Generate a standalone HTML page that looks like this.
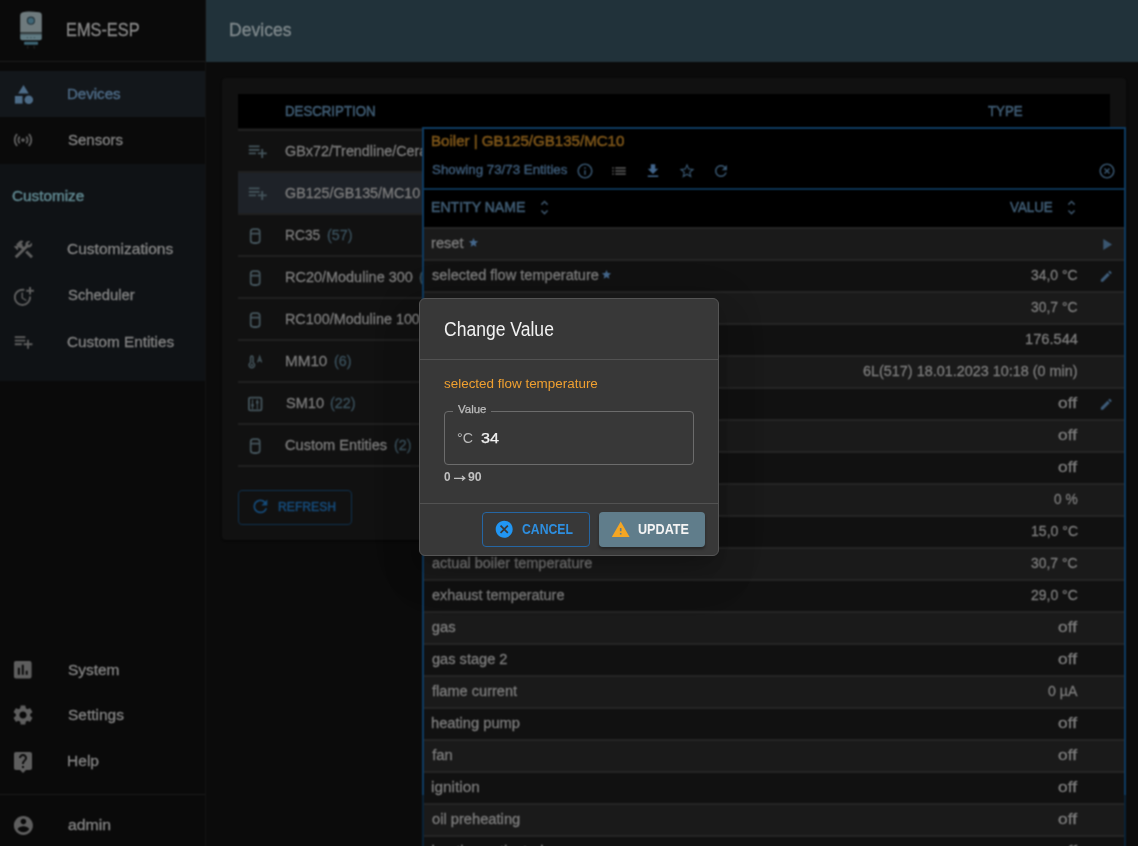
<!DOCTYPE html>
<html><head><meta charset="utf-8"><title>EMS-ESP Devices</title>
<style>html,body{margin:0;padding:0;}body{width:1138px;height:846px;overflow:hidden;position:relative;background:#0b0b0b;font-family:"Liberation Sans",sans-serif;}svg{display:block}#w{position:absolute;left:-20px;top:-20px;width:1178px;height:886px;overflow:hidden;background:#0b0b0b;filter:url(#bf);}#c{position:absolute;left:20px;top:20px;width:1138px;height:846px;}</style></head><body><svg width="0" height="0" style="position:absolute"><filter id="bf" x="0" y="0" width="100%" height="100%" color-interpolation-filters="sRGB"><feConvolveMatrix order="3" kernelMatrix="1 2 1 2 4 2 1 2 1" divisor="16" edgeMode="duplicate"/></filter></svg><div id="w"><div id="c">
<div style="position:absolute;left:-20px;top:-20px;width:225px;height:886px;background:#0a0a0a;"></div>
<div style="position:absolute;left:-20px;top:61px;width:225px;height:1px;background:#1c1c1c;"></div>
<div style="position:absolute;left:-20px;top:71px;width:225px;height:46px;background:#13171b;"></div>
<div style="position:absolute;left:-20px;top:164px;width:225px;height:217px;background:#0f1215;"></div>
<div style="position:absolute;left:-20px;top:794px;width:225px;height:1px;background:#1a1a1a;"></div>
<div style="position:absolute;left:205px;top:-20px;width:1px;height:886px;background:#131313;"></div>
<svg style="position:absolute;left:14px;top:6px" width="36" height="46" viewBox="0 0 36 46">
<path d="M6.2 9.2Q6.2 6.6 8.8 6.2L11.5 5.7Q16.9 5.4 25.3 6.2Q27.8 6.5 27.8 9V26.3H6.2z" fill="#6e7a7d"/>
<rect x="6.2" y="26.3" width="21.6" height="2" fill="#3b4649"/>
<path d="M6.2 28.3H27.8V32.3Q27.8 34.3 25.8 34.3H8.2Q6.2 34.3 6.2 32.3z" fill="#607a82"/>
<circle cx="13.4" cy="31.6" r="0.7" fill="#3f5258"/><circle cx="16.9" cy="31.6" r="0.7" fill="#3f5258"/><circle cx="20.4" cy="31.6" r="0.7" fill="#3f5258"/>
<circle cx="16.9" cy="14.7" r="4.1" fill="#24343b"/><circle cx="16.9" cy="14.7" r="3" fill="#3f6676"/>
<rect x="10" y="35.8" width="14.1" height="3" rx="1" fill="#3d6575"/>
<rect x="13.2" y="39.6" width="1.1" height="3" fill="#262626"/><rect x="19.6" y="39.6" width="1.1" height="3" fill="#262626"/>
</svg>
<div style="position:absolute;left:65.69px;top:20.62px;font-size:18.75px;line-height:18.75px;color:#8a8a8a;font-weight:normal;white-space:nowrap;transform:scaleX(0.8718);transform-origin:0 0;-webkit-text-stroke:0.3px #8a8a8a;">EMS-ESP</div>
<svg style="position:absolute;left:11.5px;top:83px;" width="23" height="23" viewBox="0 0 24 24" fill="#4d6c88"><path d="M12 2l-5.5 9h11z"/><path d="M17.5 17.5m-4.5 0a4.5 4.5 0 1 0 9 0a4.5 4.5 0 1 0 -9 0"/><path d="M3 13.5h8v8H3z"/></svg>
<div style="position:absolute;left:66.89px;top:85.80px;font-size:15.12px;line-height:15.12px;color:#4d6a85;font-weight:normal;white-space:nowrap;-webkit-text-stroke:0.4px #4d6a85;">Devices</div>
<svg style="position:absolute;left:12.2px;top:128.8px;" width="22" height="22" viewBox="0 0 24 24" fill="#5e5e5e"><path d="M7.76 16.24C6.67 15.16 6 13.66 6 12s.67-3.16 1.76-4.24l1.42 1.42C8.45 9.9 8 10.9 8 12c0 1.1.45 2.1 1.17 2.83l-1.41 1.41zm8.48 0C17.33 15.16 18 13.66 18 12s-.67-3.16-1.76-4.24l-1.42 1.42C15.55 9.9 16 10.9 16 12c0 1.1-.45 2.1-1.17 2.83l1.41 1.41zM12 10c-1.1 0-2 .9-2 2s.9 2 2 2 2-.9 2-2-.9-2-2-2zm8 2c0 2.21-.9 4.21-2.35 5.65l1.42 1.42C20.88 17.26 22 14.76 22 12s-1.12-5.26-2.93-7.07l-1.42 1.42C19.1 7.79 20 9.79 20 12zM6.35 6.35 4.93 4.93C3.12 6.74 2 9.24 2 12s1.12 5.26 2.93 7.07l1.42-1.42C4.9 16.21 4 14.210 4 12s.9-4.21 2.35-5.65z"/></svg>
<div style="position:absolute;left:67.50px;top:132.20px;font-size:15.12px;line-height:15.12px;color:#848484;font-weight:normal;white-space:nowrap;transform:scaleX(0.9909);transform-origin:0 0;-webkit-text-stroke:0.3px #848484;">Sensors</div>
<div style="position:absolute;left:11.54px;top:188.20px;font-size:15.12px;line-height:15.12px;color:#5e858d;font-weight:normal;white-space:nowrap;transform:scaleX(1.0114);transform-origin:0 0;-webkit-text-stroke:0.5px #5e858d;">Customize</div>
<svg style="position:absolute;left:11.7px;top:237.5px;" width="23" height="23" viewBox="0 0 24 24" fill="#5e5e5e"><path d="M13.78 15.17l2.12-2.12 6 6-2.12 2.12z"/><path d="M17.5 10c1.93 0 3.5-1.57 3.5-3.5 0-.58-.16-1.12-.41-1.6l-2.7 2.7-1.49-1.49 2.7-2.7c-.48-.25-1.02-.41-1.6-.41C15.57 3 14 4.57 14 6.5c0 .41.08.8.21 1.16l-1.85 1.85-1.78-1.78.71-.71-1.41-1.41L12 3.49c-1.17-1.17-3.07-1.17-4.24 0L4.22 7.03l1.41 1.41H2.81l-.71.71 3.54 3.54.71-.71V9.15l1.41 1.41.71-.71 1.78 1.78-7.41 7.41 2.12 2.12L16.34 9.79c.36.13.75.21 1.16.21z"/></svg>
<div style="position:absolute;left:67.32px;top:241.10px;font-size:15.12px;line-height:15.12px;color:#848484;font-weight:normal;white-space:nowrap;transform:scaleX(1.0281);transform-origin:0 0;-webkit-text-stroke:0.3px #848484;">Customizations</div>
<svg style="position:absolute;left:12.4px;top:284.5px;" width="22.8" height="22.8" viewBox="0 0 24 24" fill="#5e5e5e"><path d="M10 8v6l4.7 2.9.8-1.2-4-2.4V8z"/><path d="M17.92 12c.05.33.08.66.08 1 0 3.9-3.1 7-7 7s-7-3.1-7-7 3.1-7 7-7c.7 0 1.37.1 2 .29V4.23c-.64-.15-1.31-.23-2-.23-5 0-9 4-9 9s4 9 9 9 9-4 9-9c0-.34-.02-.67-.06-1h-2.02z"/><path d="M20 5V2h-2v3h-3v2h3v3h2V7h3V5z"/></svg>
<div style="position:absolute;left:67.61px;top:286.80px;font-size:15.12px;line-height:15.12px;color:#848484;font-weight:normal;white-space:nowrap;transform:scaleX(0.9812);transform-origin:0 0;-webkit-text-stroke:0.3px #848484;">Scheduler</div>
<svg style="position:absolute;left:13.3px;top:330.8px;" width="21.2" height="21.2" viewBox="0 0 24 24" fill="#5e5e5e"><path d="M14 10H2v2h12v-2zm0-4H2v2h12V6zm4 8v-4h-2v4h-4v2h4v4h2v-4h4v-2h-4zM2 16h8v-2H2v2z"/></svg>
<div style="position:absolute;left:67.43px;top:333.80px;font-size:15.12px;line-height:15.12px;color:#848484;font-weight:normal;white-space:nowrap;transform:scaleX(1.0130);transform-origin:0 0;-webkit-text-stroke:0.3px #848484;">Custom Entities</div>
<svg style="position:absolute;left:11.1px;top:657.7px;" width="23.5" height="23.5" viewBox="0 0 24 24" fill="#5e5e5e"><path d="M19 3H5c-1.1 0-2 .9-2 2v14c0 1.1.9 2 2 2h14c1.1 0 2-.9 2-2V5c0-1.1-.9-2-2-2zM9 17H7v-7h2v7zm4 0h-2V7h2v10zm4 0h-2v-4h2v4z"/></svg>
<div style="position:absolute;left:67.58px;top:661.80px;font-size:15.12px;line-height:15.12px;color:#848484;font-weight:normal;white-space:nowrap;transform:scaleX(1.0217);transform-origin:0 0;-webkit-text-stroke:0.3px #848484;">System</div>
<svg style="position:absolute;left:10.9px;top:703.1px;" width="24" height="24" viewBox="0 0 24 24" fill="#5e5e5e"><path d="M19.14 12.94c.04-.3.06-.61.06-.94 0-.32-.02-.64-.07-.94l2.03-1.58c.18-.14.23-.41.12-.61l-1.92-3.32c-.12-.22-.37-.29-.59-.22l-2.39.96c-.5-.38-1.03-.7-1.62-.94l-.36-2.54c-.04-.24-.24-.41-.48-.41h-3.84c-.24 0-.43.17-.47.41l-.36 2.54c-.59.24-1.13.57-1.62.94l-2.39-.96c-.22-.08-.47 0-.59.22L2.74 8.87c-.12.21-.08.47.12.61l2.03 1.58c-.05.3-.09.63-.09.94s.02.64.07.94l-2.03 1.58c-.18.14-.23.41-.12.61l1.92 3.32c.12.22.37.29.59.22l2.39-.96c.5.38 1.03.7 1.62.94l.36 2.54c.05.24.24.41.48.41h3.84c.24 0 .44-.17.47-.41l.36-2.54c.59-.24 1.13-.56 1.62-.94l2.39.96c.22.08.47 0 .59-.22l1.92-3.32c.12-.22.07-.47-.12-.61l-2.01-1.58zM12 15.6c-1.98 0-3.6-1.62-3.6-3.6s1.62-3.6 3.6-3.6 3.6 1.62 3.6 3.6-1.62 3.6-3.6 3.6z"/></svg>
<div style="position:absolute;left:67.58px;top:706.80px;font-size:15.12px;line-height:15.12px;color:#848484;font-weight:normal;white-space:nowrap;transform:scaleX(1.0231);transform-origin:0 0;-webkit-text-stroke:0.3px #848484;">Settings</div>
<svg style="position:absolute;left:10.9px;top:750px;" width="24" height="24" viewBox="0 0 24 24" fill="#5e5e5e"><path d="M19 2H5c-1.11 0-2 .9-2 2v14c0 1.1.89 2 2 2h4l3 3 3-3h4c1.1 0 2-.9 2-2V4c0-1.1-.9-2-2-2zm-6 16h-2v-2h2v2zm2.07-7.75l-.9.92C13.45 11.9 13 12.5 13 14h-2v-.5c0-1.1.45-2.1 1.17-2.83l1.24-1.26c.37-.36.59-.86.59-1.41 0-1.1-.9-2-2-2s-2 .9-2 2H8c0-2.21 1.79-4 4-4s4 1.79 4 4c0 .88-.36 1.68-.93 2.25z"/></svg>
<div style="position:absolute;left:67.35px;top:752.80px;font-size:15.12px;line-height:15.12px;color:#848484;font-weight:normal;white-space:nowrap;transform:scaleX(1.0295);transform-origin:0 0;-webkit-text-stroke:0.3px #848484;">Help</div>
<svg style="position:absolute;left:11.5px;top:814px;" width="22.8" height="22.8" viewBox="0 0 24 24" fill="#5e5e5e"><path d="M12 2C6.48 2 2 6.48 2 12s4.48 10 10 10 10-4.48 10-10S17.52 2 12 2zm0 3c1.66 0 3 1.34 3 3s-1.34 3-3 3-3-1.34-3-3 1.34-3 3-3zm0 14.2c-2.5 0-4.71-1.28-6-3.22.03-1.99 4-3.08 6-3.08 1.99 0 5.97 1.09 6 3.08-1.29 1.94-3.5 3.22-6 3.22z"/></svg>
<div style="position:absolute;left:67.57px;top:817.82px;font-size:14.39px;line-height:14.39px;color:#848484;font-weight:normal;white-space:nowrap;transform:scaleX(1.0976);transform-origin:0 0;-webkit-text-stroke:0.3px #848484;">admin</div>
<div style="position:absolute;left:206px;top:-20px;width:952px;height:82px;background:#21323a;"></div>
<div style="position:absolute;left:229.39px;top:21.02px;font-size:18.17px;line-height:18.17px;color:#808a8d;font-weight:normal;white-space:nowrap;transform:scaleX(0.9677);transform-origin:0 0;-webkit-text-stroke:0.3px #808a8d;">Devices</div>
<div style="position:absolute;left:222px;top:78px;width:904px;height:462px;background:#111111;border-radius:4px;box-shadow:0px 2px 1px -1px rgba(0,0,0,0.2),0px 1px 1px 0px rgba(0,0,0,0.14),0px 1px 3px 0px rgba(0,0,0,0.12);"></div>
<div style="position:absolute;left:238px;top:94px;width:872px;height:34px;background:#000000;"></div>
<div style="position:absolute;left:285.14px;top:104.05px;font-size:14.83px;line-height:14.83px;color:#3e5a71;font-weight:normal;white-space:nowrap;transform:scaleX(0.8934);transform-origin:0 0;-webkit-text-stroke:0.6px #3e5a71;">DESCRIPTION</div>
<div style="position:absolute;left:987.93px;top:104.05px;font-size:14.83px;line-height:14.83px;color:#3e5a71;font-weight:normal;white-space:nowrap;transform:scaleX(0.8950);transform-origin:0 0;-webkit-text-stroke:0.6px #3e5a71;">TYPE</div>
<div style="position:absolute;left:238px;top:173px;width:872px;height:40px;background:#1e2228;"></div>
<div style="position:absolute;left:238px;top:129px;width:872px;height:2px;background:#1f1f1f;"></div>
<div style="position:absolute;left:238px;top:171px;width:872px;height:2px;background:#1f1f1f;"></div>
<div style="position:absolute;left:238px;top:213px;width:872px;height:2px;background:#1f1f1f;"></div>
<div style="position:absolute;left:238px;top:255px;width:872px;height:2px;background:#1f1f1f;"></div>
<div style="position:absolute;left:238px;top:297px;width:872px;height:2px;background:#1f1f1f;"></div>
<div style="position:absolute;left:238px;top:339px;width:872px;height:2px;background:#1f1f1f;"></div>
<div style="position:absolute;left:238px;top:381px;width:872px;height:2px;background:#1f1f1f;"></div>
<div style="position:absolute;left:238px;top:423px;width:872px;height:2px;background:#1f1f1f;"></div>
<div style="position:absolute;left:238px;top:465px;width:872px;height:2px;background:#1f1f1f;"></div>
<div style="position:absolute;left:285.48px;top:143.30px;font-size:15.12px;line-height:15.12px;color:#7c7c7c;font-weight:normal;white-space:nowrap;transform:scaleX(0.9500);transform-origin:0 0;-webkit-text-stroke:0.3px #7c7c7c;">GBx72/Trendline/Cerapur/Greenstar Si/27i</div>
<svg style="position:absolute;left:246.6px;top:139.9px;" width="21.5" height="21.5" viewBox="0 0 24 24" fill="#43535a"><path d="M14 10H2v2h12v-2zm0-4H2v2h12V6zm4 8v-4h-2v4h-4v2h4v4h2v-4h4v-2h-4zM2 16h8v-2H2v2z"/></svg>
<div style="position:absolute;left:285.48px;top:185.25px;font-size:15.12px;line-height:15.12px;color:#7c7c7c;font-weight:normal;white-space:nowrap;transform:scaleX(0.9467);transform-origin:0 0;-webkit-text-stroke:0.3px #7c7c7c;">GB125/GB135/MC10</div>
<svg style="position:absolute;left:246.6px;top:181.85000000000002px;" width="21.5" height="21.5" viewBox="0 0 24 24" fill="#43535a"><path d="M14 10H2v2h12v-2zm0-4H2v2h12V6zm4 8v-4h-2v4h-4v2h4v4h2v-4h4v-2h-4zM2 16h8v-2H2v2z"/></svg>
<div style="position:absolute;left:285.10px;top:227.20px;font-size:15.12px;line-height:15.12px;color:#7c7c7c;font-weight:normal;white-space:nowrap;transform:scaleX(0.9108);transform-origin:0 0;-webkit-text-stroke:0.3px #7c7c7c;">RC35</div>
<div style="position:absolute;left:327.14px;top:227.20px;font-size:15.12px;line-height:15.12px;color:#3a505c;font-weight:normal;white-space:nowrap;transform:scaleX(0.9500);transform-origin:0 0;-webkit-text-stroke:0.3px #3a505c;">(57)</div>
<svg style="position:absolute;left:243px;top:224.1px" width="24" height="24" viewBox="0 0 24 24" fill="none" stroke="#43535a" stroke-width="1.8"><rect x="7.7" y="5.1" width="9" height="13.8" rx="2.6"/><line x1="7.7" y1="9.6" x2="16.7" y2="9.6"/><line x1="10.2" y1="19.4" x2="14.2" y2="19.4" stroke-width="1.4"/></svg>
<div style="position:absolute;left:285.04px;top:269.15px;font-size:15.12px;line-height:15.12px;color:#7c7c7c;font-weight:normal;white-space:nowrap;transform:scaleX(0.9571);transform-origin:0 0;-webkit-text-stroke:0.3px #7c7c7c;">RC20/Moduline 300</div>
<div style="position:absolute;left:418.64px;top:269.15px;font-size:15.12px;line-height:15.12px;color:#3a505c;font-weight:normal;white-space:nowrap;transform:scaleX(0.9500);transform-origin:0 0;-webkit-text-stroke:0.3px #3a505c;">(11)</div>
<svg style="position:absolute;left:243px;top:266.1px" width="24" height="24" viewBox="0 0 24 24" fill="none" stroke="#43535a" stroke-width="1.8"><rect x="7.7" y="5.1" width="9" height="13.8" rx="2.6"/><line x1="7.7" y1="9.6" x2="16.7" y2="9.6"/><line x1="10.2" y1="19.4" x2="14.2" y2="19.4" stroke-width="1.4"/></svg>
<div style="position:absolute;left:285.05px;top:311.10px;font-size:15.12px;line-height:15.12px;color:#7c7c7c;font-weight:normal;white-space:nowrap;transform:scaleX(0.9500);transform-origin:0 0;-webkit-text-stroke:0.3px #7c7c7c;">RC100/Moduline 1000/1010</div>
<div style="position:absolute;left:469.14px;top:311.10px;font-size:15.12px;line-height:15.12px;color:#3a505c;font-weight:normal;white-space:nowrap;transform:scaleX(0.9500);transform-origin:0 0;-webkit-text-stroke:0.3px #3a505c;">(5)</div>
<svg style="position:absolute;left:243px;top:308.0px" width="24" height="24" viewBox="0 0 24 24" fill="none" stroke="#43535a" stroke-width="1.8"><rect x="7.7" y="5.1" width="9" height="13.8" rx="2.6"/><line x1="7.7" y1="9.6" x2="16.7" y2="9.6"/><line x1="10.2" y1="19.4" x2="14.2" y2="19.4" stroke-width="1.4"/></svg>
<div style="position:absolute;left:284.98px;top:353.05px;font-size:15.12px;line-height:15.12px;color:#7c7c7c;font-weight:normal;white-space:nowrap;transform:scaleX(1.0089);transform-origin:0 0;-webkit-text-stroke:0.3px #7c7c7c;">MM10</div>
<div style="position:absolute;left:333.64px;top:353.05px;font-size:15.12px;line-height:15.12px;color:#3a505c;font-weight:normal;white-space:nowrap;transform:scaleX(0.9500);transform-origin:0 0;-webkit-text-stroke:0.3px #3a505c;">(6)</div>
<svg style="position:absolute;left:243px;top:350.2px" width="24" height="24" viewBox="0 0 24 24" fill="none" stroke="#43535a" stroke-width="1.5"><path d="M7.55 12.65V7.3a1.25 1.25 0 0 1 2.5 0V12.65a2.75 2.75 0 1 1-2.5 0z"/><circle cx="8.8" cy="15.1" r="1.2" fill="#43535a" stroke="none"/><path d="M14.6 12.4L16.65 6.4L18.7 12.4M15.2 10.5h2.9" stroke-width="1.3"/></svg>
<div style="position:absolute;left:285.62px;top:395.00px;font-size:15.12px;line-height:15.12px;color:#7c7c7c;font-weight:normal;white-space:nowrap;transform:scaleX(0.9651);transform-origin:0 0;-webkit-text-stroke:0.3px #7c7c7c;">SM10</div>
<div style="position:absolute;left:330.14px;top:395.00px;font-size:15.12px;line-height:15.12px;color:#3a505c;font-weight:normal;white-space:nowrap;transform:scaleX(0.9500);transform-origin:0 0;-webkit-text-stroke:0.3px #3a505c;">(22)</div>
<svg style="position:absolute;left:243px;top:392.3px" width="24" height="24" viewBox="0 0 24 24" fill="none" stroke="#43535a" stroke-width="1.8"><rect x="5.9" y="5.6" width="12.6" height="12.8" rx="1.5"/><path d="M9.5 7.5v9.8M14.3 7.5v9.8" stroke-width="1.1"/><ellipse cx="9.5" cy="13.3" rx="1.3" ry="1.7" fill="#43535a" stroke="none"/><ellipse cx="14.3" cy="10.3" rx="1.3" ry="1.7" fill="#43535a" stroke="none"/></svg>
<div style="position:absolute;left:285.47px;top:436.95px;font-size:15.12px;line-height:15.12px;color:#7c7c7c;font-weight:normal;white-space:nowrap;transform:scaleX(0.9652);transform-origin:0 0;-webkit-text-stroke:0.3px #7c7c7c;">Custom Entities</div>
<div style="position:absolute;left:393.54px;top:436.95px;font-size:15.12px;line-height:15.12px;color:#3a505c;font-weight:normal;white-space:nowrap;transform:scaleX(0.9500);transform-origin:0 0;-webkit-text-stroke:0.3px #3a505c;">(2)</div>
<svg style="position:absolute;left:243px;top:433.9px" width="24" height="24" viewBox="0 0 24 24" fill="none" stroke="#43535a" stroke-width="1.8"><rect x="7.7" y="5.1" width="9" height="13.8" rx="2.6"/><line x1="7.7" y1="9.6" x2="16.7" y2="9.6"/><line x1="10.2" y1="19.4" x2="14.2" y2="19.4" stroke-width="1.4"/></svg>
<div style="position:absolute;left:237.5px;top:490px;width:114.5px;height:35px;background:transparent;box-sizing:border-box;border:1px solid #0f2f4b;border-radius:4px;"></div>
<svg style="position:absolute;left:250px;top:496.4px;" width="20.8" height="20.8" viewBox="0 0 24 24" fill="#154a78"><path d="M17.65 6.35C16.2 4.9 14.21 4 12 4c-4.42 0-7.99 3.58-7.99 8s3.57 8 7.99 8c3.73 0 6.84-2.55 7.73-6h-2.08c-.82 2.33-3.04 4-5.65 4-3.31 0-6-2.690-6-6s2.69-6 6-6c1.66 0 3.14.69 4.22 1.78L13 11h7V4l-2.35 2.35z"/></svg>
<div style="position:absolute;left:277.63px;top:499.85px;font-size:13.52px;line-height:13.52px;color:#164b7a;font-weight:normal;white-space:nowrap;transform:scaleX(0.9003);transform-origin:0 0;-webkit-text-stroke:0.55px #164b7a;">REFRESH</div>
<div style="position:absolute;left:422px;top:127px;width:704px;height:739px;background:#000000;"></div>
<div style="position:absolute;left:422px;top:127px;width:704px;height:2px;background:#0e3a60;"></div>
<div style="position:absolute;left:422px;top:127px;width:2px;height:668px;background:#0e3a60;"></div>
<div style="position:absolute;left:1124px;top:127px;width:2px;height:668px;background:#0e3a60;"></div>
<div style="position:absolute;left:422px;top:795px;width:2px;height:71px;background:#0a2236;"></div>
<div style="position:absolute;left:1124px;top:795px;width:2px;height:71px;background:#0a2236;"></div>
<div style="position:absolute;left:424px;top:188px;width:700px;height:2px;background:#0c3252;"></div>
<div style="position:absolute;left:431.49px;top:133.43px;font-size:15.55px;line-height:15.55px;color:#7e5619;font-weight:normal;white-space:nowrap;transform:scaleX(0.9701);transform-origin:0 0;-webkit-text-stroke:0.55px #7e5619;">Boiler | GB125/GB135/MC10</div>
<div style="position:absolute;left:431.97px;top:163.15px;font-size:13.52px;line-height:13.52px;color:#3b5874;font-weight:normal;white-space:nowrap;transform:scaleX(0.9848);transform-origin:0 0;-webkit-text-stroke:0.45px #3b5874;">Showing 73/73 Entities</div>
<svg style="position:absolute;left:576.0px;top:161.8px;" width="18" height="18" viewBox="0 0 24 24" fill="#36536c"><path d="M11 7h2v2h-2zm0 4h2v6h-2zm1-9C6.48 2 2 6.48 2 12s4.48 10 10 10 10-4.48 10-10S17.52 2 12 2zm0 18c-4.41 0-8-3.59-8-8s3.59-8 8-8 8 3.59 8 8-3.59 8-8 8z"/></svg>
<svg style="position:absolute;left:609.9px;top:161.8px;" width="18" height="18" viewBox="0 0 24 24" fill="#5a5a5a"><path d="M3 13h2v-2H3v2zm0 4h2v-2H3v2zm0-8h2V7H3v2zm4 4h14v-2H7v2zm0 4h14v-2H7v2zM7 7v2h14V7H7z"/></svg>
<svg style="position:absolute;left:644.0px;top:161.8px;" width="18" height="18" viewBox="0 0 24 24" fill="#41648a"><path d="M19 9h-4V3H9v6H5l7 7 7-7zM5 18v2h14v-2H5z"/></svg>
<svg style="position:absolute;left:678.0px;top:161.8px;" width="18" height="18" viewBox="0 0 24 24" fill="#36536c"><path d="M22 9.24l-7.19-.62L12 2 9.19 8.63 2 9.24l5.46 4.73L5.82 21 12 17.27 18.18 21l-1.63-7.03L22 9.24zM12 15.4l-3.76 2.27 1-4.28-3.32-2.88 4.38-.38L12 6.1l1.71 4.04 4.38.38-3.32 2.88 1 4.28L12 15.4z"/></svg>
<svg style="position:absolute;left:711.8px;top:161.8px;" width="18" height="18" viewBox="0 0 24 24" fill="#36536c"><path d="M17.65 6.35C16.2 4.9 14.21 4 12 4c-4.42 0-7.99 3.58-7.99 8s3.57 8 7.99 8c3.73 0 6.84-2.55 7.73-6h-2.08c-.82 2.33-3.04 4-5.65 4-3.31 0-6-2.690-6-6s2.69-6 6-6c1.66 0 3.14.69 4.22 1.78L13 11h7V4l-2.35 2.35z"/></svg>
<svg style="position:absolute;left:1098.0px;top:161.8px;" width="18" height="18" viewBox="0 0 24 24" fill="#36536c"><path d="M14.59 8 12 10.59 9.41 8 8 9.41 10.59 12 8 14.59 9.41 16 12 13.41 14.59 16 16 14.59 13.41 12 16 9.41 14.59 8zM12 2C6.47 2 2 6.47 2 12s4.47 10 10 10 10-4.47 10-10S17.53 2 12 2zm0 18c-4.41 0-8-3.59-8-8s3.59-8 8-8 8 3.59 8 8-3.59 8-8 8z"/></svg>
<div style="position:absolute;left:431.17px;top:199.99px;font-size:14.54px;line-height:14.54px;color:#3e5a71;font-weight:normal;white-space:nowrap;transform:scaleX(0.9686);transform-origin:0 0;-webkit-text-stroke:0.6px #3e5a71;">ENTITY NAME</div>
<svg style="position:absolute;left:534.5px;top:198px;" width="19" height="19" viewBox="0 0 24 24" fill="#3b5267"><path d="M12 5.83 15.17 9l1.41-1.41L12 3 7.41 7.59 8.83 9 12 5.83zm0 12.34L8.83 15l-1.41 1.41L12 21l4.59-4.59L15.17 15 12 18.17z"/></svg>
<div style="position:absolute;left:1009.80px;top:199.99px;font-size:14.54px;line-height:14.54px;color:#3e5a71;font-weight:normal;white-space:nowrap;transform:scaleX(0.9164);transform-origin:0 0;-webkit-text-stroke:0.6px #3e5a71;">VALUE</div>
<svg style="position:absolute;left:1062px;top:198px;" width="19" height="19" viewBox="0 0 24 24" fill="#3b5267"><path d="M12 5.83 15.17 9l1.41-1.41L12 3 7.41 7.59 8.83 9 12 5.83zm0 12.34L8.83 15l-1.41 1.41L12 21l4.59-4.59L15.17 15 12 18.17z"/></svg>
<div style="position:absolute;left:424px;top:227px;width:700px;height:2px;background:#242424;"></div>
<div style="position:absolute;left:424px;top:229px;width:700px;height:30px;background:#1a1a1a;"></div>
<div style="position:absolute;left:431.42px;top:236.45px;font-size:14.83px;line-height:14.83px;color:#7c7c7c;font-weight:normal;white-space:nowrap;transform:scaleX(0.9875);transform-origin:0 0;-webkit-text-stroke:0.3px #7c7c7c;">reset</div>
<svg style="position:absolute;left:468.3px;top:237.2px;" width="11" height="11" viewBox="0 0 24 24" fill="#44668a"><path d="M12 17.27 18.18 21l-1.64-7.03L22 9.24l-7.19-.61L12 2 9.19 8.63 2 9.24l5.46 4.73L5.82 21z"/></svg>
<svg style="position:absolute;left:1097px;top:235px;" width="19" height="19" viewBox="0 0 24 24" fill="#3a5670"><path d="M8 5v14l11-7z"/></svg>
<div style="position:absolute;left:424px;top:259px;width:700px;height:2px;background:#242424;"></div>
<div style="position:absolute;left:424px;top:261px;width:700px;height:30px;background:#111111;"></div>
<div style="position:absolute;left:432.01px;top:268.45px;font-size:14.83px;line-height:14.83px;color:#7c7c7c;font-weight:normal;white-space:nowrap;transform:scaleX(0.9827);transform-origin:0 0;-webkit-text-stroke:0.3px #7c7c7c;">selected flow temperature</div>
<svg style="position:absolute;left:601.4px;top:269.0px;" width="11" height="11" viewBox="0 0 24 24" fill="#44668a"><path d="M12 17.27 18.18 21l-1.64-7.03L22 9.24l-7.19-.61L12 2 9.19 8.63 2 9.24l5.46 4.73L5.82 21z"/></svg>
<div style="position:absolute;left:1031.08px;top:268.45px;font-size:14.83px;line-height:14.83px;color:#7c7c7c;font-weight:normal;white-space:nowrap;transform:scaleX(0.9366);transform-origin:0 0;-webkit-text-stroke:0.3px #7c7c7c;">34,0 °C</div>
<svg style="position:absolute;left:1098.5px;top:268.6px;" width="14.5" height="14.5" viewBox="0 0 24 24" fill="#3d5a76"><path d="M3 17.25V21h3.75L17.81 9.94l-3.75-3.75L3 17.25zM20.71 7.04c.39-.39.39-1.02 0-1.41l-2.34-2.34a.9959.9959 0 0 0-1.41 0l-1.83 1.83 3.75 3.75 1.83-1.83z"/></svg>
<div style="position:absolute;left:424px;top:291px;width:700px;height:2px;background:#242424;"></div>
<div style="position:absolute;left:424px;top:293px;width:700px;height:30px;background:#1a1a1a;"></div>
<div style="position:absolute;left:1031.08px;top:300.45px;font-size:14.83px;line-height:14.83px;color:#7c7c7c;font-weight:normal;white-space:nowrap;transform:scaleX(0.9366);transform-origin:0 0;-webkit-text-stroke:0.3px #7c7c7c;">30,7 °C</div>
<div style="position:absolute;left:424px;top:323px;width:700px;height:2px;background:#242424;"></div>
<div style="position:absolute;left:424px;top:325px;width:700px;height:30px;background:#111111;"></div>
<div style="position:absolute;left:1024.58px;top:332.45px;font-size:14.83px;line-height:14.83px;color:#7c7c7c;font-weight:normal;white-space:nowrap;transform:scaleX(0.9872);transform-origin:0 0;-webkit-text-stroke:0.3px #7c7c7c;">176.544</div>
<div style="position:absolute;left:424px;top:355px;width:700px;height:2px;background:#242424;"></div>
<div style="position:absolute;left:424px;top:357px;width:700px;height:30px;background:#1a1a1a;"></div>
<div style="position:absolute;left:863.38px;top:364.45px;font-size:14.83px;line-height:14.83px;color:#7c7c7c;font-weight:normal;white-space:nowrap;transform:scaleX(0.9710);transform-origin:0 0;-webkit-text-stroke:0.3px #7c7c7c;">6L(517) 18.01.2023 10:18 (0 min)</div>
<div style="position:absolute;left:424px;top:387px;width:700px;height:2px;background:#242424;"></div>
<div style="position:absolute;left:424px;top:389px;width:700px;height:30px;background:#111111;"></div>
<div style="position:absolute;left:1058.00px;top:396.45px;font-size:14.83px;line-height:14.83px;color:#7c7c7c;font-weight:normal;white-space:nowrap;transform:scaleX(1.1754);transform-origin:0 0;-webkit-text-stroke:0.3px #7c7c7c;">off</div>
<svg style="position:absolute;left:1098.5px;top:396.6px;" width="14.5" height="14.5" viewBox="0 0 24 24" fill="#3d5a76"><path d="M3 17.25V21h3.75L17.81 9.94l-3.75-3.75L3 17.25zM20.71 7.04c.39-.39.39-1.02 0-1.41l-2.34-2.34a.9959.9959 0 0 0-1.41 0l-1.83 1.83 3.75 3.75 1.83-1.83z"/></svg>
<div style="position:absolute;left:424px;top:419px;width:700px;height:2px;background:#242424;"></div>
<div style="position:absolute;left:424px;top:421px;width:700px;height:30px;background:#1a1a1a;"></div>
<div style="position:absolute;left:1058.00px;top:428.45px;font-size:14.83px;line-height:14.83px;color:#7c7c7c;font-weight:normal;white-space:nowrap;transform:scaleX(1.1754);transform-origin:0 0;-webkit-text-stroke:0.3px #7c7c7c;">off</div>
<div style="position:absolute;left:424px;top:451px;width:700px;height:2px;background:#242424;"></div>
<div style="position:absolute;left:424px;top:453px;width:700px;height:30px;background:#111111;"></div>
<div style="position:absolute;left:1058.00px;top:460.45px;font-size:14.83px;line-height:14.83px;color:#7c7c7c;font-weight:normal;white-space:nowrap;transform:scaleX(1.1754);transform-origin:0 0;-webkit-text-stroke:0.3px #7c7c7c;">off</div>
<div style="position:absolute;left:424px;top:483px;width:700px;height:2px;background:#242424;"></div>
<div style="position:absolute;left:424px;top:485px;width:700px;height:30px;background:#1a1a1a;"></div>
<div style="position:absolute;left:1053.89px;top:492.45px;font-size:14.83px;line-height:14.83px;color:#7c7c7c;font-weight:normal;white-space:nowrap;transform:scaleX(0.9242);transform-origin:0 0;-webkit-text-stroke:0.3px #7c7c7c;">0 %</div>
<div style="position:absolute;left:424px;top:515px;width:700px;height:2px;background:#242424;"></div>
<div style="position:absolute;left:424px;top:517px;width:700px;height:30px;background:#111111;"></div>
<div style="position:absolute;left:1030.52px;top:524.45px;font-size:14.83px;line-height:14.83px;color:#7c7c7c;font-weight:normal;white-space:nowrap;transform:scaleX(0.9481);transform-origin:0 0;-webkit-text-stroke:0.3px #7c7c7c;">15,0 °C</div>
<div style="position:absolute;left:424px;top:547px;width:700px;height:2px;background:#242424;"></div>
<div style="position:absolute;left:424px;top:549px;width:700px;height:30px;background:#1a1a1a;"></div>
<div style="position:absolute;left:431.72px;top:556.45px;font-size:14.83px;line-height:14.83px;color:#7c7c7c;font-weight:normal;white-space:nowrap;transform:scaleX(0.9775);transform-origin:0 0;-webkit-text-stroke:0.3px #7c7c7c;">actual boiler temperature</div>
<div style="position:absolute;left:1031.08px;top:556.45px;font-size:14.83px;line-height:14.83px;color:#7c7c7c;font-weight:normal;white-space:nowrap;transform:scaleX(0.9366);transform-origin:0 0;-webkit-text-stroke:0.3px #7c7c7c;">30,7 °C</div>
<div style="position:absolute;left:424px;top:579px;width:700px;height:2px;background:#242424;"></div>
<div style="position:absolute;left:424px;top:581px;width:700px;height:30px;background:#111111;"></div>
<div style="position:absolute;left:431.72px;top:588.45px;font-size:14.83px;line-height:14.83px;color:#7c7c7c;font-weight:normal;white-space:nowrap;transform:scaleX(0.9737);transform-origin:0 0;-webkit-text-stroke:0.3px #7c7c7c;">exhaust temperature</div>
<div style="position:absolute;left:1030.80px;top:588.45px;font-size:14.83px;line-height:14.83px;color:#7c7c7c;font-weight:normal;white-space:nowrap;transform:scaleX(0.9423);transform-origin:0 0;-webkit-text-stroke:0.3px #7c7c7c;">29,0 °C</div>
<div style="position:absolute;left:424px;top:611px;width:700px;height:2px;background:#242424;"></div>
<div style="position:absolute;left:424px;top:613px;width:700px;height:30px;background:#1a1a1a;"></div>
<div style="position:absolute;left:431.71px;top:620.45px;font-size:14.83px;line-height:14.83px;color:#7c7c7c;font-weight:normal;white-space:nowrap;-webkit-text-stroke:0.3px #7c7c7c;">gas</div>
<div style="position:absolute;left:1058.00px;top:620.45px;font-size:14.83px;line-height:14.83px;color:#7c7c7c;font-weight:normal;white-space:nowrap;transform:scaleX(1.1754);transform-origin:0 0;-webkit-text-stroke:0.3px #7c7c7c;">off</div>
<div style="position:absolute;left:424px;top:643px;width:700px;height:2px;background:#242424;"></div>
<div style="position:absolute;left:424px;top:645px;width:700px;height:30px;background:#111111;"></div>
<div style="position:absolute;left:431.72px;top:652.45px;font-size:14.83px;line-height:14.83px;color:#7c7c7c;font-weight:normal;white-space:nowrap;transform:scaleX(0.9844);transform-origin:0 0;-webkit-text-stroke:0.3px #7c7c7c;">gas stage 2</div>
<div style="position:absolute;left:1058.00px;top:652.45px;font-size:14.83px;line-height:14.83px;color:#7c7c7c;font-weight:normal;white-space:nowrap;transform:scaleX(1.1754);transform-origin:0 0;-webkit-text-stroke:0.3px #7c7c7c;">off</div>
<div style="position:absolute;left:424px;top:675px;width:700px;height:2px;background:#242424;"></div>
<div style="position:absolute;left:424px;top:677px;width:700px;height:30px;background:#1a1a1a;"></div>
<div style="position:absolute;left:432.15px;top:684.45px;font-size:14.83px;line-height:14.83px;color:#7c7c7c;font-weight:normal;white-space:nowrap;transform:scaleX(0.9838);transform-origin:0 0;-webkit-text-stroke:0.3px #7c7c7c;">flame current</div>
<div style="position:absolute;left:1047.68px;top:684.45px;font-size:14.83px;line-height:14.83px;color:#7c7c7c;font-weight:normal;white-space:nowrap;transform:scaleX(0.9541);transform-origin:0 0;-webkit-text-stroke:0.3px #7c7c7c;">0 µA</div>
<div style="position:absolute;left:424px;top:707px;width:700px;height:2px;background:#242424;"></div>
<div style="position:absolute;left:424px;top:709px;width:700px;height:30px;background:#111111;"></div>
<div style="position:absolute;left:431.42px;top:716.45px;font-size:14.83px;line-height:14.83px;color:#7c7c7c;font-weight:normal;white-space:nowrap;transform:scaleX(0.9907);transform-origin:0 0;-webkit-text-stroke:0.3px #7c7c7c;">heating pump</div>
<div style="position:absolute;left:1058.00px;top:716.45px;font-size:14.83px;line-height:14.83px;color:#7c7c7c;font-weight:normal;white-space:nowrap;transform:scaleX(1.1754);transform-origin:0 0;-webkit-text-stroke:0.3px #7c7c7c;">off</div>
<div style="position:absolute;left:424px;top:739px;width:700px;height:2px;background:#242424;"></div>
<div style="position:absolute;left:424px;top:741px;width:700px;height:30px;background:#1a1a1a;"></div>
<div style="position:absolute;left:432.15px;top:748.45px;font-size:14.83px;line-height:14.83px;color:#7c7c7c;font-weight:normal;white-space:nowrap;-webkit-text-stroke:0.3px #7c7c7c;">fan</div>
<div style="position:absolute;left:1058.00px;top:748.45px;font-size:14.83px;line-height:14.83px;color:#7c7c7c;font-weight:normal;white-space:nowrap;transform:scaleX(1.1754);transform-origin:0 0;-webkit-text-stroke:0.3px #7c7c7c;">off</div>
<div style="position:absolute;left:424px;top:771px;width:700px;height:2px;background:#242424;"></div>
<div style="position:absolute;left:424px;top:773px;width:700px;height:30px;background:#111111;"></div>
<div style="position:absolute;left:431.38px;top:780.45px;font-size:14.83px;line-height:14.83px;color:#7c7c7c;font-weight:normal;white-space:nowrap;transform:scaleX(1.0384);transform-origin:0 0;-webkit-text-stroke:0.3px #7c7c7c;">ignition</div>
<div style="position:absolute;left:1058.00px;top:780.45px;font-size:14.83px;line-height:14.83px;color:#7c7c7c;font-weight:normal;white-space:nowrap;transform:scaleX(1.1754);transform-origin:0 0;-webkit-text-stroke:0.3px #7c7c7c;">off</div>
<div style="position:absolute;left:424px;top:803px;width:700px;height:2px;background:#242424;"></div>
<div style="position:absolute;left:424px;top:805px;width:700px;height:30px;background:#1a1a1a;"></div>
<div style="position:absolute;left:431.71px;top:812.45px;font-size:14.83px;line-height:14.83px;color:#7c7c7c;font-weight:normal;white-space:nowrap;transform:scaleX(0.9909);transform-origin:0 0;-webkit-text-stroke:0.3px #7c7c7c;">oil preheating</div>
<div style="position:absolute;left:1058.00px;top:812.45px;font-size:14.83px;line-height:14.83px;color:#7c7c7c;font-weight:normal;white-space:nowrap;transform:scaleX(1.1754);transform-origin:0 0;-webkit-text-stroke:0.3px #7c7c7c;">off</div>
<div style="position:absolute;left:424px;top:835px;width:700px;height:2px;background:#242424;"></div>
<div style="position:absolute;left:424px;top:837px;width:700px;height:30px;background:#111111;"></div>
<div style="position:absolute;left:431.41px;top:844.45px;font-size:14.83px;line-height:14.83px;color:#7c7c7c;font-weight:normal;white-space:nowrap;-webkit-text-stroke:0.3px #7c7c7c;">heating activated</div>
<div style="position:absolute;left:1058.00px;top:844.45px;font-size:14.83px;line-height:14.83px;color:#7c7c7c;font-weight:normal;white-space:nowrap;transform:scaleX(1.1754);transform-origin:0 0;-webkit-text-stroke:0.3px #7c7c7c;">off</div>
</div></div>
<div style="position:absolute;left:419px;top:298px;width:300px;height:258px;background:#383838;box-sizing:border-box;border:1px solid #555555;border-radius:6px;box-shadow:0px 11px 15px -7px rgba(0,0,0,0.2),0px 24px 38px 3px rgba(0,0,0,0.1),0px 9px 46px 8px rgba(0,0,0,0.08);"></div>
<div style="position:absolute;left:420px;top:359px;width:298px;height:1px;background:#525252;"></div>
<div style="position:absolute;left:420px;top:503px;width:298px;height:1px;background:#525252;"></div>
<div style="position:absolute;left:443.72px;top:320.13px;font-size:19.33px;line-height:19.33px;color:#f2f2f2;font-weight:normal;white-space:nowrap;transform:scaleX(0.9076);transform-origin:0 0;">Change Value</div>
<div style="position:absolute;left:444.23px;top:377.45px;font-size:13.52px;line-height:13.52px;color:#f0a030;font-weight:normal;white-space:nowrap;transform:scaleX(0.9940);transform-origin:0 0;">selected flow temperature</div>
<div style="position:absolute;left:444px;top:411px;width:250px;height:54px;background:transparent;box-sizing:border-box;border:1px solid #6c6c6c;border-radius:4px;"></div>
<div style="position:absolute;left:453px;top:408px;width:38px;height:8px;background:#383838;"></div>
<div style="position:absolute;left:458.00px;top:403.45px;font-size:11.63px;line-height:11.63px;color:#bdbdbd;font-weight:normal;white-space:nowrap;transform:scaleX(0.9839);transform-origin:0 0;-webkit-text-stroke:0.25px #bdbdbd;">Value</div>
<div style="position:absolute;left:457.29px;top:430.26px;font-size:15.41px;line-height:15.41px;color:#b9b9b9;font-weight:normal;white-space:nowrap;transform:scaleX(0.9237);transform-origin:0 0;">°C</div>
<div style="position:absolute;left:481.21px;top:430.26px;font-size:15.41px;line-height:15.41px;color:#f2f2f2;font-weight:normal;white-space:nowrap;transform:scaleX(1.0509);transform-origin:0 0;-webkit-text-stroke:0.25px #f2f2f2;">34</div>
<div style="position:absolute;left:443.94px;top:471.19px;font-size:12.06px;line-height:12.06px;color:#c0c0c0;font-weight:bold;white-space:nowrap;transform:scaleX(0.9811);transform-origin:0 0;">0</div>
<div style="position:absolute;left:467.73px;top:471.19px;font-size:12.06px;line-height:12.06px;color:#c0c0c0;font-weight:bold;white-space:nowrap;transform:scaleX(1.0221);transform-origin:0 0;">90</div>
<svg style="position:absolute;left:452px;top:473px" width="16" height="10" viewBox="0 0 16 10"><path d="M2 5.3H12.6M10 3.1L12.8 5.3L10 7.5" fill="none" stroke="#c0c0c0" stroke-width="1.25"/></svg>
<div style="position:absolute;left:482px;top:512px;width:108px;height:35px;background:transparent;box-sizing:border-box;border:1px solid #2566a3;border-radius:4px;"></div>
<svg style="position:absolute;left:493.7px;top:518.6px;" width="20.4" height="20.4" viewBox="0 0 24 24" fill="#2196f3"><path d="M12 2C6.47 2 2 6.47 2 12s4.47 10 10 10 10-4.47 10-10S17.53 2 12 2zm5 13.59L15.59 17 12 13.41 8.41 17 7 15.59 10.59 12 7 8.41 8.41 7 12 10.59 15.59 7 17 8.41 13.41 12 17 15.59z"/></svg>
<div style="position:absolute;left:522.01px;top:521.75px;font-size:14.83px;line-height:14.83px;color:#2e8fe0;font-weight:bold;white-space:nowrap;transform:scaleX(0.8247);transform-origin:0 0;">CANCEL</div>
<div style="position:absolute;left:599px;top:512px;width:106px;height:35px;background:#607d8b;border-radius:4px;box-shadow:0 2px 3px rgba(0,0,0,0.35);"></div>
<svg style="position:absolute;left:611.4px;top:519.5px;" width="19.4" height="19.4" viewBox="0 0 24 24" fill="#f5a623"><path d="M1 21h22L12 2 1 21zm12-3h-2v-2h2v2zm0-4h-2v-4h2v4z"/></svg>
<div style="position:absolute;left:638.24px;top:521.75px;font-size:14.83px;line-height:14.83px;color:#f4f4f4;font-weight:bold;white-space:nowrap;transform:scaleX(0.8508);transform-origin:0 0;">UPDATE</div>
</body></html>
